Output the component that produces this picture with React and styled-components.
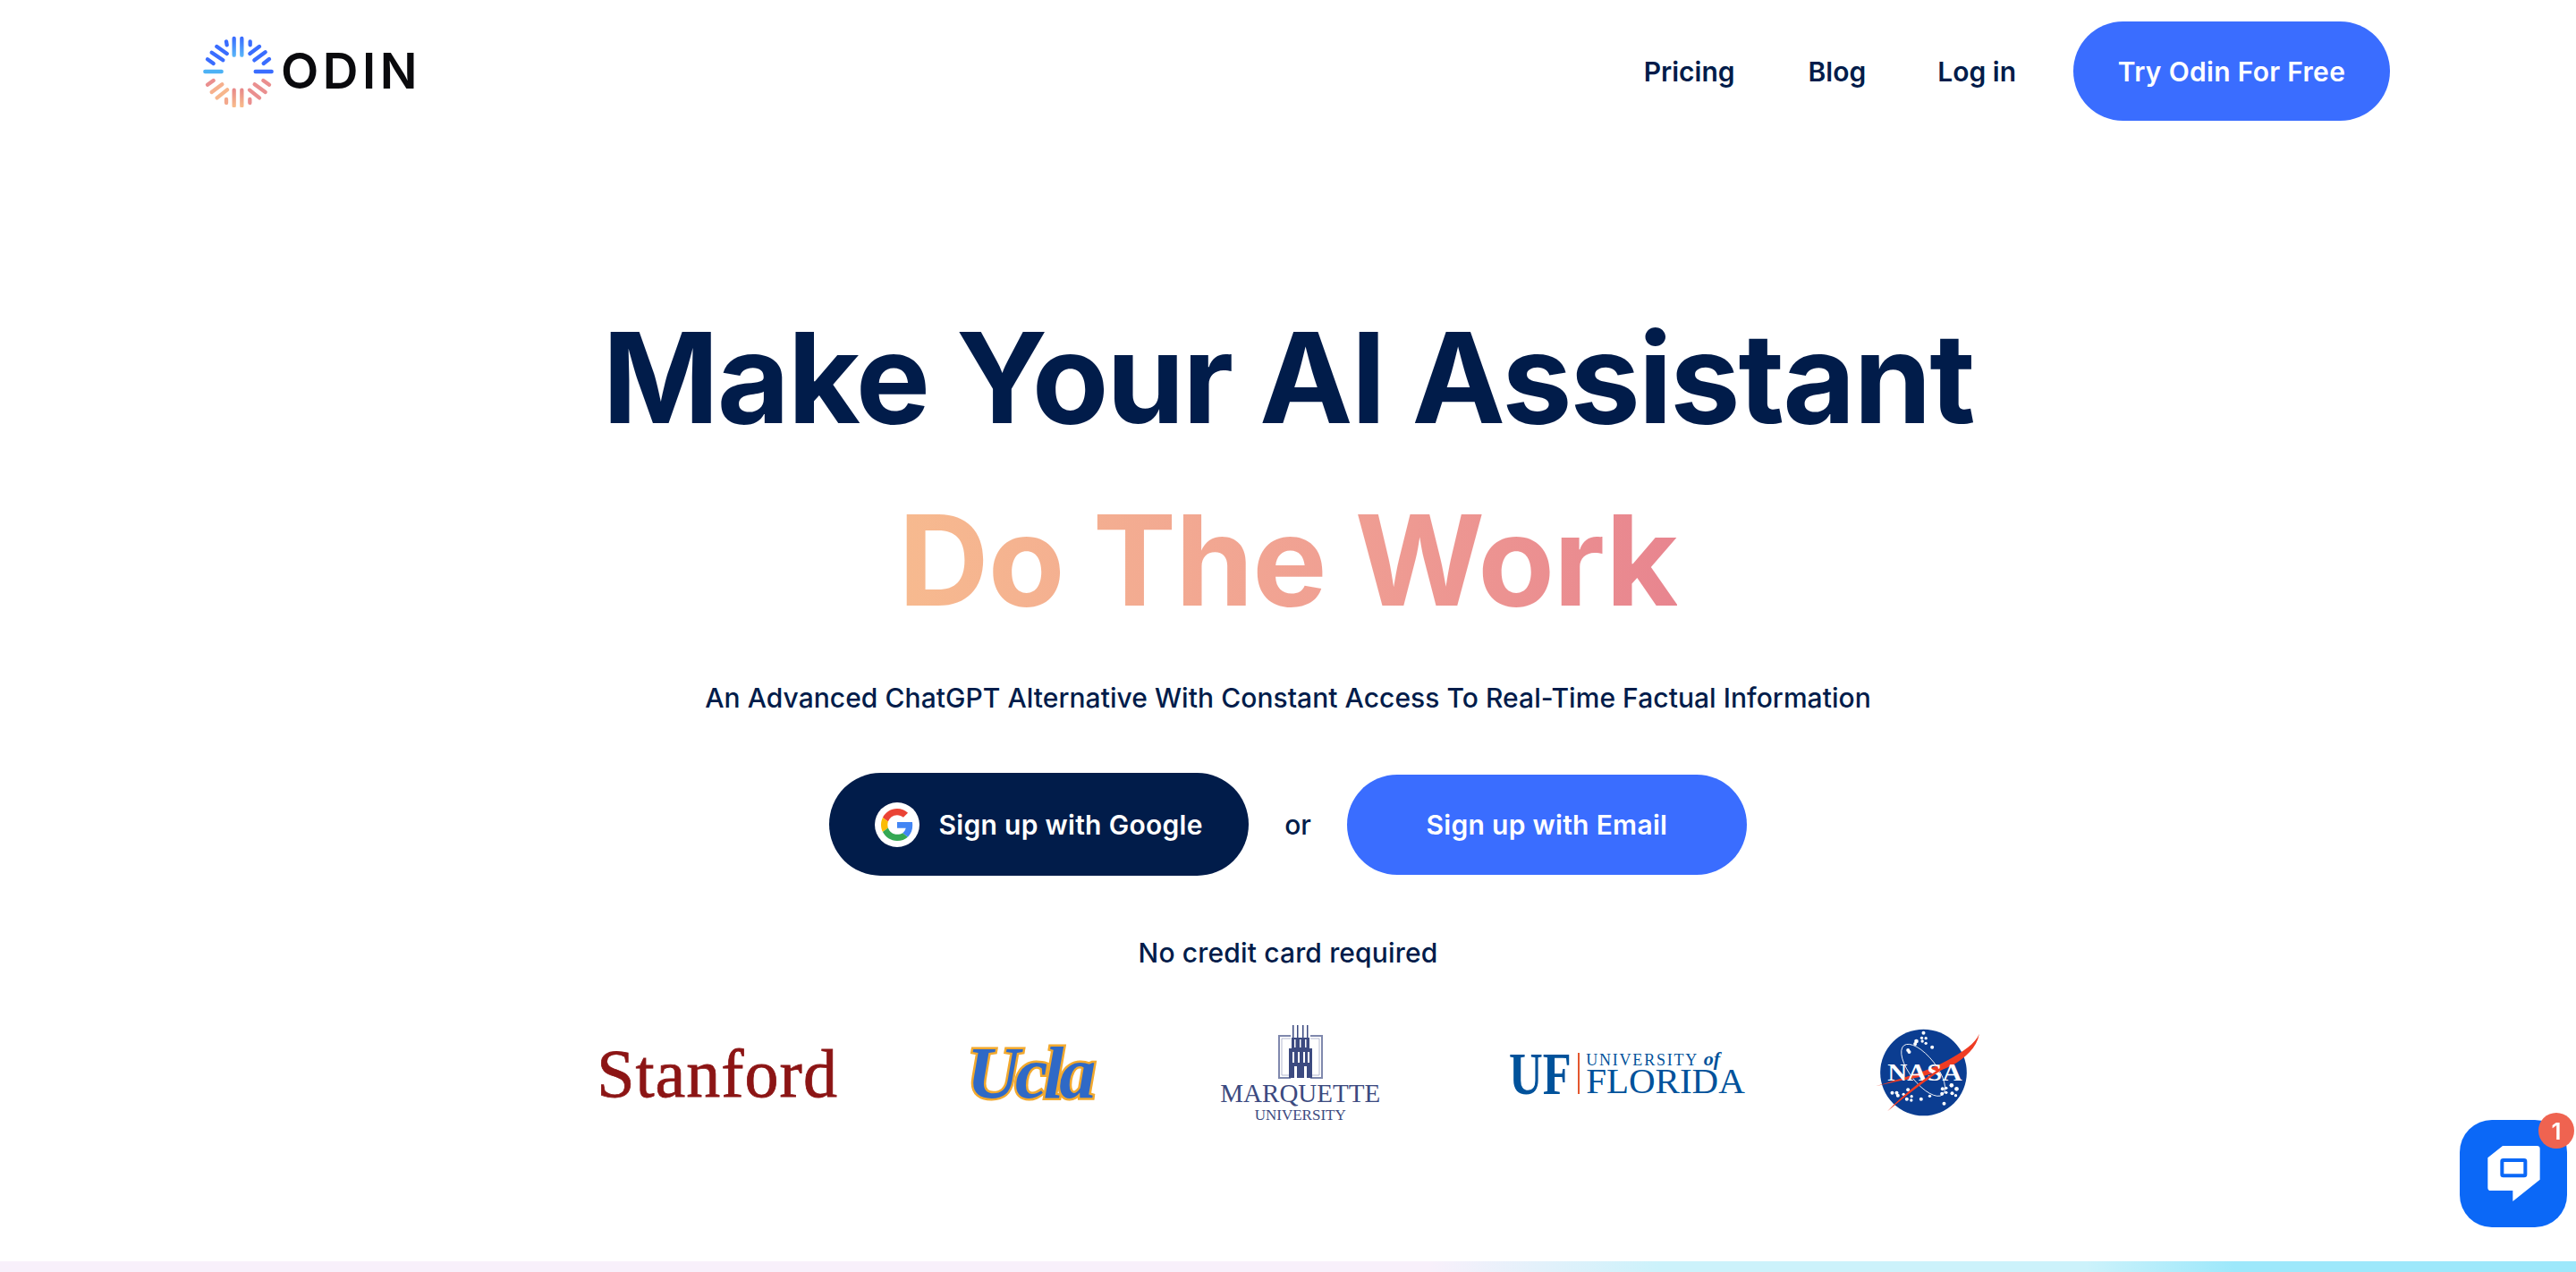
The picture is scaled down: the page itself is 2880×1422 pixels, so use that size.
import styled, { createGlobalStyle } from 'styled-components';

const navy = '#011c4a';
const blue = '#3a6dff';

const GlobalStyle = createGlobalStyle`
  html, body {
    margin: 0;
    padding: 0;
    background: #fff;
    overflow: hidden;
    font-family: Inter, "Liberation Sans", sans-serif;
  }
`;

const Page = styled.div`
  height: 1422px;
  display: flex;
  flex-direction: column;
  color: ${navy};
`;

const Nav = styled.nav`
  display: flex;
  align-items: center;
  justify-content: space-between;
  padding: 24px 208px 0 226px;
`;

const Brand = styled.div`
  display: flex;
  align-items: center;
  gap: 8px;
`;

const BrandName = styled.span`
  font-size: 55px;
  font-weight: 600;
  line-height: 1;
  letter-spacing: 4.5px;
  color: #0a0a0d;
`;

const NavLinks = styled.div`
  display: flex;
  align-items: center;
`;

const NavLink = styled.a`
  font-size: 30px;
  font-weight: 600;
  margin-right: ${(p) => p.$gap}px;
`;

const PillButton = styled.button`
  border: none;
  border-radius: 999px;
  display: flex;
  align-items: center;
  justify-content: center;
  gap: 21px;
  font-family: inherit;
  font-size: 30px;
  font-weight: 600;
  letter-spacing: 0.3px;
  color: #fff;
  background: ${(p) => p.$bg};
  width: ${(p) => p.$w}px;
  height: ${(p) => p.$h}px;
  padding: 0;
`;

const Hero = styled.main`
  display: flex;
  flex-direction: column;
  align-items: center;
  padding-top: 185px;
  flex: 1;
`;

const Title = styled.h1`
  margin: 0;
  font-size: 140px;
  font-weight: 700;
  display: flex;
  flex-direction: column;
  align-items: center;
`;

const TitleLine = styled.span`
  line-height: 204px;
  letter-spacing: -2.2px;
  white-space: nowrap;
`;

const GradientLine = styled(TitleLine)`
  letter-spacing: -1px;
  background: linear-gradient(90deg, #f7ba8f 0%, #f0a093 55%, #e8858f 100%);
  -webkit-background-clip: text;
  background-clip: text;
  color: transparent;
`;

const Subtitle = styled.p`
  margin: 32px 0 0;
  font-size: 30px;
  font-weight: 500;
  line-height: 40px;
  letter-spacing: 0.05px;
`;

const SignupRow = styled.div`
  display: flex;
  align-items: center;
  gap: 40px;
  margin-top: 64px;
`;

const GoogleBadge = styled.span`
  width: 50px;
  height: 50px;
  border-radius: 50%;
  background: #fff;
  display: flex;
  align-items: center;
  justify-content: center;
`;

const Or = styled.span`
  font-size: 30px;
  font-weight: 500;
`;

const Note = styled.p`
  margin: 66px 0 0;
  font-size: 30px;
  font-weight: 500;
  line-height: 40px;
  letter-spacing: 0.15px;
`;

const LogoRow = styled.div`
  display: flex;
  align-items: center;
  gap: 144px;
  margin-top: 55px;
  height: 120px;
`;

const Stanford = styled.span`
  font-family: "Liberation Serif", serif;
  font-size: 76px;
  line-height: 1;
  letter-spacing: 1px;
  color: #8c1515;
  -webkit-text-stroke: 0.8px #8c1515;
`;

const Ucla = styled.span`
  font-family: "Liberation Serif", serif;
  font-size: 82px;
  font-weight: 700;
  font-style: italic;
  line-height: 1;
  letter-spacing: -5px;
  color: #2f69c6;
  -webkit-text-stroke: 5px #f2a92e;
  paint-order: stroke fill;
`;

const Marquette = styled.div`
  display: flex;
  flex-direction: column;
  align-items: center;
  font-family: "Liberation Serif", serif;
  color: #3c4a80;
  line-height: 1;
`;

const MarquetteName = styled.span`
  font-size: 29px;
  margin-top: 2px;
`;

const MarquetteSub = styled.span`
  font-size: 17px;
  margin-top: 1px;
`;

const Florida = styled.div`
  display: flex;
  align-items: stretch;
  font-family: "Liberation Serif", serif;
  color: #00529b;
  height: 46px;
`;

const FloridaMark = styled.span`
  width: 69px;
  font-size: 68px;
  font-weight: 700;
  line-height: 46px;
  transform: scaleX(0.77);
  transform-origin: left center;
  white-space: nowrap;
`;

const FloridaRule = styled.span`
  width: 2px;
  background: #e4572e;
  margin: 0 7px 0 8px;
`;

const FloridaText = styled.div`
  display: flex;
  flex-direction: column;
  justify-content: space-between;
`;

const FloridaTop = styled.span`
  font-size: 18px;
  line-height: 14px;
  letter-spacing: 1.8px;
  white-space: nowrap;
  em {
    font-size: 22px;
    font-weight: 700;
    letter-spacing: 0;
  }
`;

const FloridaName = styled.span`
  font-size: 41px;
  line-height: 30px;
`;

const Strip = styled.div`
  height: 12px;
  background: linear-gradient(90deg, #f8f0fb 0, #f8f0fb 1598px, #ccf2fb 1855px, #ccf2fb 2333px, #9de8fb 2498px);
`;

const ChatWidget = styled.div`
  position: fixed;
  left: 2750px;
  top: 1252px;
  width: 120px;
  height: 120px;
  border-radius: 36px;
  background: #0b68f7;
  display: flex;
  align-items: center;
  justify-content: center;
`;

const ChatBadge = styled.span`
  position: absolute;
  top: -8px;
  right: -8px;
  width: 40px;
  height: 40px;
  border-radius: 50%;
  background: #ef6350;
  color: #fff;
  font-size: 26px;
  font-weight: 600;
  display: flex;
  align-items: center;
  justify-content: center;
`;

const rays = [
  [187, 97, 187, 153, 'url(#odinTop)'], [213, 97, 213, 153, 'url(#odinTop)'],
  [161, 107, 163, 119, blue], [241, 107, 241, 119, blue],
  [129, 124, 163, 148, blue], [272, 124, 240, 148, blue],
  [112, 144, 150, 170, blue], [292, 143, 255, 170, blue],
  [98, 167, 118, 181, blue], [305, 166, 286, 181, blue],
  [90, 208, 145, 208, '#4db2f5'], [259, 208, 313, 208, blue],
  [98, 252, 118, 238, '#ea8f8f'], [305, 252, 285, 238, '#ea8f8f'],
  [112, 277, 147, 251, '#f6b08d'], [292, 277, 256, 251, '#ea8f8f'],
  [130, 296, 164, 269, '#f7b68c'], [272, 296, 239, 270, '#ea8f8f'],
  [161, 301, 161, 313, '#f3a88c'], [240, 301, 240, 313, '#ea8f8f'],
  [187, 270, 187, 323, 'url(#odinBottom)'], [213, 270, 213, 323, 'url(#odinBottom)'],
];

const OdinMark = () => (
  <svg width="80" height="80" viewBox="80 88 240 240">
    <defs>
      <linearGradient id="odinTop" gradientUnits="userSpaceOnUse" x1="0" y1="95" x2="0" y2="155">
        <stop offset="0" stopColor="#3a6dff" />
        <stop offset="1" stopColor="#58b4f8" />
      </linearGradient>
      <linearGradient id="odinBottom" gradientUnits="userSpaceOnUse" x1="0" y1="268" x2="0" y2="325">
        <stop offset="0" stopColor="#e88a8a" />
        <stop offset="1" stopColor="#f8bb8c" />
      </linearGradient>
    </defs>
    {rays.map(([x1, y1, x2, y2, c]) => (
      <line key={`${x1}-${y1}`} x1={x1} y1={y1} x2={x2 + 0.01} y2={y2 + 0.01} stroke={c} strokeWidth="13" strokeLinecap="round" />
    ))}
  </svg>
);

const GoogleIcon = () => (
  <svg width="36" height="36" viewBox="0 0 48 48">
    <path fill="#EA4335" d="M24 9.5c3.54 0 6.71 1.22 9.21 3.6l6.85-6.85C35.9 2.38 30.47 0 24 0 14.62 0 6.51 5.38 2.56 13.22l7.98 6.19C12.43 13.72 17.74 9.5 24 9.5z" />
    <path fill="#4285F4" d="M46.98 24.55c0-1.57-.15-3.09-.38-4.55H24v9.02h12.94c-.58 2.96-2.26 5.48-4.78 7.18l7.73 6c4.51-4.18 7.09-10.36 7.09-17.65z" />
    <path fill="#FBBC05" d="M10.53 28.59c-.48-1.45-.76-2.99-.76-4.59s.27-3.14.76-4.59l-7.98-6.19C.92 16.46 0 20.12 0 24c0 3.88.92 7.54 2.56 10.78l7.97-6.19z" />
    <path fill="#34A853" d="M24 48c6.48 0 11.93-2.13 15.89-5.81l-7.73-6c-2.15 1.45-4.92 2.3-8.16 2.3-6.26 0-11.57-4.22-13.47-9.91l-7.98 6.19C6.51 42.62 14.62 48 24 48z" />
  </svg>
);

const MarquetteTower = () => (
  <svg width="50" height="60" viewBox="0 0 50 60">
    <path fill="none" stroke="#7f88ad" strokeWidth="2" d="M14 12H1v47h13M36 12h13v47H36" />
    <path fill="none" stroke="#b4b9d0" strokeWidth="1" d="M14 15H4v41h10M36 15h10v41H36" />
    <path fill="#3c4a80" d="M16 0h1.5v14H16zM21 0h1.5v14H21zM27 0h1.5v14H27zM32 0h1.5v14H32z" />
    <path fill="#3c4a80" d="M15 14h20v12H15zM12 26h26v33h-6V46h-3v13h-8V46h-3v13h-6z" />
    <path fill="#fff" d="M18 16h1.5v9H18zM24 16h1.5v9H24zM30 16h1.5v9H30zM16 30h2v12h-2zM22 30h2v12h-2zM28 30h2v12h-2zM33 30h2v12h-2z" />
  </svg>
);

const stars = [
  [316, 80, 6], [310, 97, 5], [324, 98, 5], [312, 108, 5], [324, 115, 5], [345, 128, 6],
  [292, 108, 7], [288, 117, 6], [264, 138, 6], [268, 144, 6],
  [211, 281, 6], [226, 281, 6], [230, 290, 6], [249, 286, 5], [264, 271, 6], [260, 302, 6],
  [276, 293, 5], [275, 306, 5], [308, 302, 6], [337, 292, 5], [385, 317, 6],
  [380, 268, 6], [392, 265, 5], [378, 284, 6], [392, 280, 5], [410, 256, 7], [412, 283, 6],
  [424, 290, 5], [427, 268, 7],
];

const NasaLogo = () => (
  <svg width="118" height="104" viewBox="150 60 353 312">
    <circle cx="316" cy="213" r="145" fill="#0b3d91" />
    {stars.map(([cx, cy, r]) => (
      <circle key={`${cx}-${cy}`} cx={cx} cy={cy} r={r} fill="#fff" />
    ))}
    <ellipse cx="315" cy="205" rx="44" ry="105" transform="rotate(-38 315 205)" fill="none" stroke="#fff" strokeWidth="2.5" />
    <path fill="#ef3c23" d="M155 259C230 235 330 210 400 170C450 142 490 115 503 83C495 130 455 165 410 190C360 215 300 232 240 240z" />
    <text x="195" y="240" textLength="250" lengthAdjust="spacingAndGlyphs" fontFamily="'Liberation Serif', serif" fontWeight="700" fontSize="80" fill="#fff">NASA</text>
    <path fill="#ef3c23" d="M195 343C260 275 340 215 435 160L438 163C350 220 270 280 195 343z" />
  </svg>
);

const ChatIcon = () => (
  <svg width="59" height="62" viewBox="180 192 175 186">
    <path fill="#fff" d="M230 192h115q10 0 10 10v103l-91 73v-36h-74q-10 0-10-10V232z" />
    <rect x="228" y="240" width="78" height="52" rx="4" fill="none" stroke="#0b68f7" strokeWidth="12" />
  </svg>
);

export default function App() {
  return (
    <>
      <GlobalStyle />
      <Page>
        <Nav>
          <Brand>
            <OdinMark />
            <BrandName>ODIN</BrandName>
          </Brand>
          <NavLinks>
            <NavLink $gap={82}>Pricing</NavLink>
            <NavLink $gap={80}>Blog</NavLink>
            <NavLink $gap={64}>Log in</NavLink>
            <PillButton $bg={blue} $w={354} $h={111}>Try Odin For Free</PillButton>
          </NavLinks>
        </Nav>
        <Hero>
          <Title>
            <TitleLine>Make Your AI Assistant</TitleLine>
            <GradientLine>Do The Work</GradientLine>
          </Title>
          <Subtitle>An Advanced ChatGPT Alternative With Constant Access To Real-Time Factual Information</Subtitle>
          <SignupRow>
            <PillButton $bg={navy} $w={469} $h={115}>
              <GoogleBadge><GoogleIcon /></GoogleBadge>
              Sign up with Google
            </PillButton>
            <Or>or</Or>
            <PillButton $bg={blue} $w={447} $h={112}>Sign up with Email</PillButton>
          </SignupRow>
          <Note>No credit card required</Note>
          <LogoRow>
            <Stanford>Stanford</Stanford>
            <Ucla>Ucla</Ucla>
            <Marquette>
              <MarquetteTower />
              <MarquetteName>MARQUETTE</MarquetteName>
              <MarquetteSub>UNIVERSITY</MarquetteSub>
            </Marquette>
            <Florida>
              <FloridaMark>UF</FloridaMark>
              <FloridaRule />
              <FloridaText>
                <FloridaTop>UNIVERSITY <em>of</em></FloridaTop>
                <FloridaName>FLORIDA</FloridaName>
              </FloridaText>
            </Florida>
            <NasaLogo />
          </LogoRow>
        </Hero>
        <Strip />
        <ChatWidget>
          <ChatIcon />
          <ChatBadge>1</ChatBadge>
        </ChatWidget>
      </Page>
    </>
  );
}
